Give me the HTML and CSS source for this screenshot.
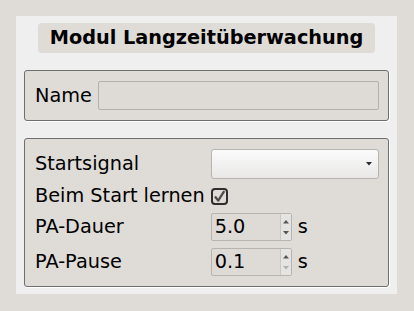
FILE: index.html
```html
<!DOCTYPE html>
<html>
<head>
<meta charset="utf-8">
<link rel="stylesheet" href="styles.css">
</head>
<body>
<div class="panel">
  <div class="title">Modul Langzeitüberwachung</div>
  <div class="group group-name">
    <span class="label">Name</span>
    <div class="lineedit"></div>
  </div>
  <div class="group group-form">
    <span class="label">Startsignal</span>
    <div class="combo">
      <svg class="combo-arrow" width="6" height="4" viewBox="0 0 6 4"><path d="M0 0H6L3 3.5Z" fill="#2a2a2a"/></svg>
    </div>
    <span class="label">Beim Start lernen</span>
    <div class="checkrow">
      <div class="checkbox">
        <svg width="17" height="17" viewBox="0 0 17 17"><path d="M4 8.5L7.2 12.6L13.2 3.2" fill="none" stroke="#4d4d4d" stroke-width="2.3" stroke-linejoin="round"/></svg>
      </div>
    </div>
    <span class="label">PA-Dauer</span>
    <div class="spinrow">
      <div class="spin">
        <span class="value">5.0</span>
        <div class="buttons">
          <svg width="6" height="4" viewBox="0 0 6 4"><path d="M0 3.5H6L3 0Z" fill="#555"/></svg>
          <svg width="6" height="4" viewBox="0 0 6 4"><path d="M0 0H6L3 3.5Z" fill="#555"/></svg>
        </div>
      </div>
      <span class="unit">s</span>
    </div>
    <span class="label">PA-Pause</span>
    <div class="spinrow">
      <div class="spin">
        <span class="value">0.1</span>
        <div class="buttons">
          <svg width="6" height="4" viewBox="0 0 6 4"><path d="M0 3.5H6L3 0Z" fill="#555"/></svg>
          <svg width="6" height="4" viewBox="0 0 6 4"><path d="M0 0H6L3 3.5Z" fill="#b0b0b0"/></svg>
        </div>
      </div>
      <span class="unit">s</span>
    </div>
  </div>
</div>
</body>
</html>
```
FILE: styles.css
```css
html, body {
  margin: 0;
  padding: 0;
}
body {
  background: #dfdbd7;
  font-family: "DejaVu Sans", sans-serif;
  font-size: 19.3px;
  color: #000;
  padding: 16px 0 0 16px;
  height: 311px;
  box-sizing: border-box;
}
.panel {
  width: 381px;
  height: 278px;
  box-sizing: border-box;
  background: #efefef;
  padding: 7px 8px;
  display: flex;
  flex-direction: column;
  gap: 17px;
}
.title {
  align-self: center;
  width: 337px;
  height: 30px;
  line-height: 30px;
  background: #dfdbd7;
  border-radius: 4px;
  text-align: center;
  font-weight: bold;
}
.group {
  border: 1px solid #6f6f6f;
  border-radius: 3px;
  background: #dfdbd7;
  box-shadow: 1px 1px 0 #ffffff;
  box-sizing: border-box;
}
.label {
  line-height: 20px;
  white-space: nowrap;
}
.group-name {
  height: 51px;
  display: flex;
  align-items: center;
  gap: 6px;
  padding: 0 9px 0 10px;
}
.lineedit {
  flex: 1;
  height: 29px;
  box-sizing: border-box;
  border: 1px solid #b4b0ac;
  border-radius: 2px;
  background: #dedad6;
}
.group-form {
  display: grid;
  grid-template-columns: max-content 1fr;
  column-gap: 6px;
  row-gap: 7px;
  align-items: center;
  padding: 10px 9px 10px 10px;
}
.combo {
  height: 30px;
  box-sizing: border-box;
  border: 1px solid #b7b3af;
  border-radius: 3px;
  background: linear-gradient(#fbfbfb, #e9e8e7);
  display: flex;
  align-items: center;
  justify-content: flex-end;
  padding-right: 6px;
}
.checkrow {
  height: 20px;
  display: flex;
  align-items: center;
}
.checkbox {
  width: 17px;
  height: 17px;
  box-sizing: border-box;
  border: 2px solid #2e2e2e;
  border-radius: 4px;
  position: relative;
}
.checkbox svg {
  position: absolute;
  left: -2px;
  top: -2px;
}
.spinrow {
  display: flex;
  align-items: center;
  gap: 6px;
}
.spin {
  width: 81px;
  height: 28px;
  box-sizing: border-box;
  border: 1px solid #b7b3af;
  border-radius: 2px;
  background: #dedad6;
  display: flex;
}
.value {
  flex: 1;
  padding-left: 3px;
  line-height: 26px;
}
.buttons {
  width: 10px;
  border-left: 1px solid #c9c6c3;
  background: #e6e4e2;
  display: flex;
  flex-direction: column;
  justify-content: space-between;
  align-items: center;
  padding: 6px 0 5px;
}
.buttons svg {
  display: block;
}
.unit {
  line-height: 20px;
}
```
